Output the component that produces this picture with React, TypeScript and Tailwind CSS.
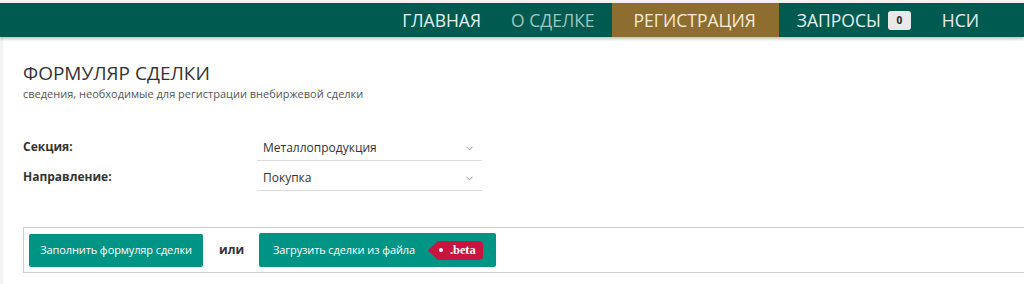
import { ChevronDown } from 'lucide-react'

function Select({ value }: { value: string }) {
  return (
    <div className="w-[225px] h-[30px] flex items-end justify-between pl-[6px] pr-[7px] pb-[4px] border-b border-[#dcdcdc] text-[12px] text-[#333]">
      <span className="leading-[16px]">{value}</span>
      <ChevronDown className="w-[11px] h-[11px] mb-[2px] text-[#666]" strokeWidth={1.5} />
    </div>
  )
}

function BetaTag() {
  return (
    <span className="ml-[13px] flex items-center h-[19px]">
      <svg width="10" height="19" viewBox="0 0 10 19" className="block">
        <path d="M10 0 L10 19 L0 9.5 Z" fill="#c8143f" />
      </svg>
      <span className="h-[19px] flex items-center bg-[#c8143f] rounded-r-[4px] pl-[1px] pr-[7px]">
        <span className="w-[4px] h-[4px] rounded-full bg-white mr-[7px]" />
        <span className="text-[12.5px] font-bold text-white" style={{ fontFamily: '"Liberation Serif", serif' }}>
          .beta
        </span>
      </span>
    </span>
  )
}

export default function App() {
  return (
    <div
      className="min-h-screen bg-[#f3f3f3] pt-[3px]"
      style={{ fontFamily: '"Open Sans", "Noto Sans", sans-serif' }}
    >
      <nav className="h-[34px] bg-[#005a50] flex justify-end items-stretch pr-[29px] text-[17.5px] shadow-[0_2px_3px_rgba(0,0,0,0.25)] relative z-10">
        <div className="flex items-center pr-[15px] text-[#e6f0ee]">ГЛАВНАЯ</div>
        <div className="flex items-center pl-[15px] pr-[17px] text-[#9fc5bd]">О СДЕЛКЕ</div>
        <div className="flex items-center bg-[#8d6d30] pl-[22px] pr-[23px] text-[#f4ecd8]">РЕГИСТРАЦИЯ</div>
        <div className="flex items-center pl-[18px] pr-4 text-[#e6f0ee]">
          ЗАПРОСЫ
          <span className="ml-[7px] w-[23px] h-[19px] rounded-[3px] bg-[#e9e9e9] text-[#222] text-[10px] font-bold flex items-center justify-center">
            0
          </span>
        </div>
        <div className="flex items-center pl-[15px] pr-4 text-[#e6f0ee]">НСИ</div>
      </nav>

      <div className="ml-[3px] bg-white min-h-[247px] pl-[20px] pt-[22px]">
        <h1 className="text-[19px] leading-[28px] text-[#333] font-normal">ФОРМУЛЯР СДЕЛКИ</h1>
        <p className="text-[11px] leading-[14px] text-[#555]">
          сведения, необходимые для регистрации внебиржевой сделки
        </p>

        <div className="mt-[30px] grid grid-cols-[234px_225px]">
          <div className="text-[12px] font-bold text-[#333] pt-[7px]">Секция:</div>
          <Select value="Металлопродукция" />
          <div className="text-[12px] font-bold text-[#333] pt-[7px]">Направление:</div>
          <Select value="Покупка" />
        </div>

        <div className="mt-[36px] border border-r-0 border-[#cfcfcf] h-[46px] flex items-center pl-[5px]">
          <button className="h-[33px] w-[174px] bg-[#009484] text-white text-[11px] tracking-[-0.1px] rounded-[2px]">
            Заполнить формуляр сделки
          </button>
          <span className="ml-[16px] mr-[15px] text-[12px] font-bold text-[#333]">или</span>
          <button className="h-[34px] w-[237px] pl-[14px] bg-[#009484] text-white text-[11px] tracking-[-0.1px] rounded-[2px] flex items-center">
            Загрузить сделки из файла
            <BetaTag />
          </button>
        </div>
      </div>
    </div>
  )
}
